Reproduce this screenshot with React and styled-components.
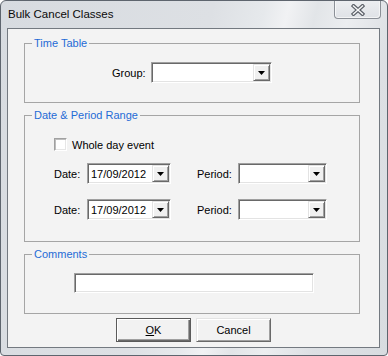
import React from 'react';
import styled, { createGlobalStyle } from 'styled-components';

const GlobalStyle = createGlobalStyle`
  html, body { margin: 0; padding: 0; background: #ffffff; }
  body {
    font-family: "Liberation Sans", Arial, sans-serif;
    font-size: 11px;
    color: #000;
  }
  * { box-sizing: border-box; }
`;

const Window = styled.div`
  width: 388px;
  height: 356px;
  border: 1px solid #5e656e;
  border-radius: 6px 6px 4px 4px;
  background: linear-gradient(
    104deg,
    #d7dbe0 0%,
    #dde0e4 45%,
    #e6e9ec 56%,
    #f1f2f4 61%,
    #e2e5e8 67%,
    #eceef0 74%,
    #dde0e4 84%,
    #d8dce0 100%
  );
  display: flex;
  flex-direction: column;
  padding: 0 7px 7px 6px;
  overflow: hidden;
`;

const TitleBar = styled.div`
  height: 27px;
  margin: 0 -7px 0 -6px;
  display: flex;
  align-items: flex-start;
`;

const TitleText = styled.div`
  flex: 1;
  padding-left: 7px;
  line-height: 27px;
  font-size: 11.5px;
  color: #0a0a0a;
`;

const CloseButton = styled.div`
  width: 47px;
  height: 18px;
  margin-right: 6px;
  border: 1px solid #8b9097;
  border-top: none;
  border-radius: 0 0 4px 4px;
  background: linear-gradient(#eceef1, #dfe2e6);
  box-shadow: inset 1px 0 #f6f7f8, inset -1px -1px #f3f4f5;
  display: flex;
  align-items: center;
  justify-content: center;
`;

const Client = styled.div`
  flex: 1;
  border: 1px solid #737980;
  background: #f3f3f3;
  display: flex;
  flex-direction: column;
  padding: 14px 19px 0 16px;
`;

const GroupBox = styled.div`
  position: relative;
  height: ${(p) => p.$h}px;
  border: 1px solid #a5a5a5;
  margin-top: ${(p) => p.$mt || 0}px;
  display: flex;
  flex-direction: column;
  padding: ${(p) => p.$pad};
`;

const Legend = styled.span`
  position: absolute;
  top: -7px;
  left: 7px;
  padding: 0 2px;
  background: #f3f3f3;
  color: #1f6bd6;
  font-size: 11px;
  line-height: 13px;
  white-space: nowrap;
`;

const Row = styled.div`
  display: flex;
  align-items: center;
  height: ${(p) => p.$h || 21}px;
  margin-top: ${(p) => p.$mt || 0}px;
`;

const FieldLabel = styled.span`
  width: ${(p) => p.$w}px;
  flex: none;
  text-align: ${(p) => p.$align || 'left'};
  padding-right: ${(p) => p.$pr || 0}px;
  white-space: nowrap;
  margin-right: ${(p) => p.$mr || 0}px;
`;

const Sunken = styled.div`
  width: ${(p) => p.$w}px;
  height: ${(p) => p.$h || 21}px;
  flex: none;
  border: 1px solid;
  border-color: #a0a0a0 #ffffff #ffffff #a0a0a0;
  box-shadow: inset 1px 1px #696969, inset -1px -1px #e3e3e3;
  background: #ffffff;
  padding: 1px;
  display: flex;
  align-items: center;
  margin-right: ${(p) => p.$mr || 0}px;
`;

const ComboValue = styled.span`
  flex: 1;
  padding-left: 2px;
  white-space: nowrap;
  overflow: hidden;
`;

const DropButton = styled.div`
  width: 17px;
  height: 17px;
  flex: none;
  background: #f0f0f0;
  border: 1px solid;
  border-color: #e3e3e3 #696969 #696969 #e3e3e3;
  box-shadow: inset 1px 1px #ffffff, inset -1px -1px #a0a0a0;
  display: flex;
  align-items: center;
  justify-content: center;
`;

const CheckBox = styled.span`
  width: 13px;
  height: 13px;
  flex: none;
  border: 1px solid;
  border-color: #a0a0a0 #ffffff #ffffff #a0a0a0;
  box-shadow: inset 1px 1px #bdbdbd, inset -1px -1px #e6e6e6;
  background: #ffffff;
  margin-right: 5px;
`;

const ButtonRow = styled.div`
  display: flex;
  justify-content: center;
  gap: 5px;
  margin: 4px -19px 0 -16px;
`;

const Button = styled.button`
  width: 75px;
  height: 24px;
  font-family: "Liberation Sans", Arial, sans-serif;
  font-size: 11px;
  color: #000;
  background: #f2f2f2;
  padding: 0;
  border: 1px solid;
  border-color: ${(p) => (p.$default ? '#5a5a5a' : '#e3e3e3 #696969 #696969 #e3e3e3')};
  box-shadow: ${(p) =>
    p.$default
      ? 'inset 1px 1px #ffffff, inset -1px -1px #696969, inset -2px -2px #a0a0a0'
      : 'inset 1px 1px #ffffff, inset -1px -1px #a0a0a0'};
  display: flex;
  align-items: center;
  justify-content: center;
`;

const Arrow = () => (
  <svg width="7" height="4" viewBox="0 0 7 4">
    <polygon points="0,0 7,0 3.5,4" fill="#000" />
  </svg>
);

const CloseGlyph = () => (
  <svg width="14" height="12" viewBox="0 0 14 12">
    <path d="M2.5 2 L11.5 10 M11.5 2 L2.5 10" stroke="#5b6068" strokeWidth="3.8" strokeLinecap="square" fill="none" />
    <path d="M2.5 2 L11.5 10 M11.5 2 L2.5 10" stroke="#f4f5f6" strokeWidth="1.5" strokeLinecap="square" fill="none" />
  </svg>
);

const Combo = ({ w, value, mr }) => (
  <Sunken $w={w} $mr={mr}>
    <ComboValue>{value}</ComboValue>
    <DropButton>
      <Arrow />
    </DropButton>
  </Sunken>
);

const DateRow = ({ mt }) => (
  <Row $mt={mt}>
    <FieldLabel $w={33}>Date:</FieldLabel>
    <Combo w={84} value="17/09/2012" mr={26} />
    <FieldLabel $w={41}>Period:</FieldLabel>
    <Combo w={89} value="" />
  </Row>
);

export default function App() {
  return (
    <>
      <GlobalStyle />
      <Window>
        <TitleBar>
          <TitleText>Bulk Cancel Classes</TitleText>
          <CloseButton>
            <CloseGlyph />
          </CloseButton>
        </TitleBar>
        <Client>
          <GroupBox $h={60} $pad="18px 0 0 87px">
            <Legend>Time Table</Legend>
            <Row>
              <FieldLabel $w={39} $align="right" $pr={8}>Group:</FieldLabel>
              <Combo w={121} value="" />
            </Row>
          </GroupBox>

          <GroupBox $h={127} $mt={12} $pad="22px 0 0 29px">
            <Legend>Date &amp; Period Range</Legend>
            <Row $h={13}>
              <CheckBox />
              <span>Whole day event</span>
            </Row>
            <DateRow mt={12} />
            <DateRow mt={15} />
          </GroupBox>

          <GroupBox $h={60} $mt={12} $pad="18px 0 0 49px">
            <Legend>Comments</Legend>
            <Sunken $w={240} $h={20} />
          </GroupBox>

          <ButtonRow>
            <Button $default>
              <span><u>O</u>K</span>
            </Button>
            <Button>Cancel</Button>
          </ButtonRow>
        </Client>
      </Window>
    </>
  );
}
